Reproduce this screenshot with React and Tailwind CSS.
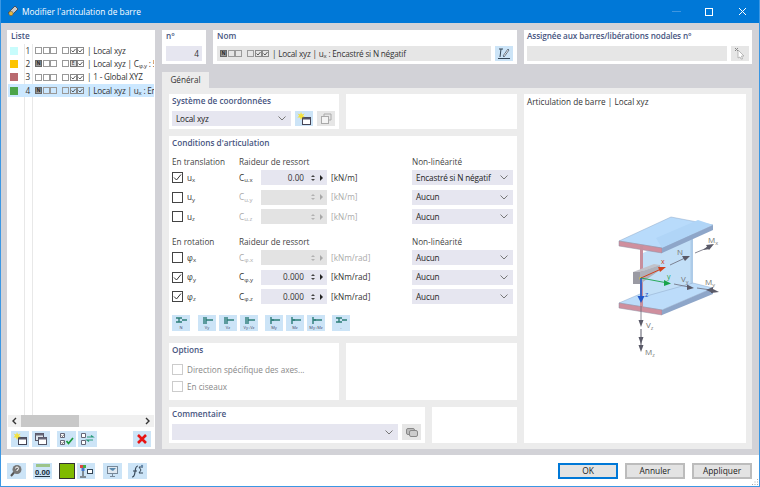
const FONT = "font-['Open_Sans',sans-serif]"

function Mini({ kind }) {
  if (kind === 'n') {
    return <span className="w-[7px] h-[7px] border border-[#666] bg-[#9a9a9a] text-[5px] leading-[5px] text-center font-bold text-[#222]">N</span>
  }
  if (kind === 'c') {
    return (
      <span className="w-[7px] h-[7px] border border-[#888] flex items-center justify-center">
        <svg width="5" height="5" viewBox="0 0 5 5"><path d="M0.5 2.5 L2 4 L4.5 1" fill="none" stroke="#333" strokeWidth="0.8" /></svg>
      </span>
    )
  }
  if (kind === 'e') {
    return <span className="w-[7px] h-[7px] border border-[#777] bg-[#ddd] text-[5px] leading-[5px] text-center text-[#333]">E</span>
  }
  return <span className="w-[7px] h-[7px] border border-[#999]" />
}

function MiniSet({ kinds }) {
  return (
    <span className="inline-flex items-center gap-[5px] shrink-0">
      <span className="flex gap-[0.5px]">{kinds[0].map((k, i) => <Mini key={i} kind={k} />)}</span>
      <span className="flex gap-[0.5px]">{kinds[1].map((k, i) => <Mini key={i} kind={k} />)}</span>
    </span>
  )
}

const LIST = [
  { n: 1, color: 'bg-[#c8fcfc]', kinds: [['o', 'o', 'o'], ['o', 'c', 'c']], text: <>| Local xyz</> },
  { n: 2, color: 'bg-[#fdc400]', kinds: [['n', 'o', 'o'], ['o', 'e', 'c']], text: <>| Local xyz | C<sub className="text-[6px]">φ.y</sub> : 5</> },
  { n: 3, color: 'bg-[#b96a6f]', kinds: [['o', 'o', 'o'], ['o', 'c', 'c']], text: <>| 1 - Global XYZ</> },
  { n: 4, color: 'bg-[#4ca54a]', kinds: [['n', 'o', 'o'], ['o', 'c', 'c']], text: <>| Local xyz | u<sub className="text-[6px]">x</sub> : En</>, active: true },
]

const ROWS_T = [
  { sym: 'u', sub: 'x', c: 'u.x', on: true, val: '0.00', unit: '[kN/m]', nl: 'Encastré si N négatif' },
  { sym: 'u', sub: 'y', c: 'u.y', on: false, val: '', unit: '[kN/m]', nl: 'Aucun' },
  { sym: 'u', sub: 'z', c: 'u.z', on: false, val: '', unit: '[kN/m]', nl: 'Aucun' },
]
const ROWS_R = [
  { sym: 'φ', sub: 'x', c: 'φ.x', on: false, val: '', unit: '[kNm/rad]', nl: 'Aucun' },
  { sym: 'φ', sub: 'y', c: 'φ.y', on: true, val: '0.000', unit: '[kNm/rad]', nl: 'Aucun' },
  { sym: 'φ', sub: 'z', c: 'φ.z', on: true, val: '0.000', unit: '[kNm/rad]', nl: 'Aucun' },
]

function Chevron({ className = '' }) {
  return (
    <svg width="8" height="5" viewBox="0 0 8 5" className={`shrink-0 ${className}`}>
      <path d="M0.5 0.5 L4 4 L7.5 0.5" fill="none" stroke="#777" strokeWidth="1" />
    </svg>
  )
}

function Check({ on, disabled }) {
  return (
    <span className={`w-[11px] h-[11px] border bg-white flex items-center justify-center shrink-0 ${disabled ? 'border-[#ccc]' : 'border-[#444]'}`}>
      {on && (
        <svg width="9" height="9" viewBox="0 0 9 9">
          <path d="M1 4.5 L3.5 7 L8 1.5" fill="none" stroke="#333" strokeWidth="1" />
        </svg>
      )}
    </span>
  )
}

function Select({ label, className = '' }) {
  return (
    <div className={`h-[15px] bg-[#e6e6f0] flex items-center justify-between pl-1 pr-[5px] whitespace-nowrap tracking-[-0.15px] font-medium text-[#222] ${className}`}>
      <span>{label}</span>
      <Chevron />
    </div>
  )
}

function Row({ row }) {
  const off = !row.on
  return (
    <div className="flex items-center h-[15px]">
      <div className="w-[67px] flex items-center shrink-0">
        <Check on={row.on} />
        <span className="ml-[4px] font-medium text-[#333]">
          {row.sym}<sub className="text-[6px]">{row.sub}</sub>
        </span>
      </div>
      <span className={`w-[22px] shrink-0 ${off ? 'text-[#aaa]' : 'text-[#333]'}`}>
        C<sub className="text-[6px]">{row.c}</sub>
      </span>
      <div className={`w-[66px] h-[15px] shrink-0 flex items-center justify-end ${off ? 'bg-[#e3e3e3]' : 'bg-[#e6e6f0]'}`}>
        <span className="font-medium text-[#333]">{row.val}</span>
        <span className={`ml-[7px] flex flex-col items-center gap-[2px] text-[#444] ${off ? 'opacity-30' : ''}`}>
          <span className="w-0 h-0 border-x-[2px] border-x-transparent border-b-[2px] border-b-current" />
          <span className="w-0 h-0 border-x-[2px] border-x-transparent border-t-[2px] border-t-current" />
        </span>
        <span className={`ml-[5px] mr-[4px] w-0 h-0 border-y-[3px] border-y-transparent border-l-[3px] border-l-[#222] ${off ? 'opacity-30' : ''}`} />
      </div>
      <span className={`ml-[4px] w-[81px] shrink-0 ${off ? 'text-[#aaa]' : 'text-[#333] font-medium'}`}>{row.unit}</span>
      <Select label={row.nl} className="w-[101px]" />
    </div>
  )
}

function ColHeads({ first }) {
  return (
    <div className="flex h-[14px] items-center font-medium text-[#444]">
      <span className="w-[67px] shrink-0">{first}</span>
      <span className="w-[173px] shrink-0">Raideur de ressort</span>
      <span>Non-linéarité</span>
    </div>
  )
}

function HingeBtn({ label, kind, className = '' }) {
  return (
    <span className={`w-[18px] h-[16px] bg-[#cce4f7] flex flex-col items-center shrink-0 ${className}`}>
      <svg width="14" height="9" viewBox="0 0 14 9" className="mt-[1px]">
        {kind === 'n' && <path d="M2 2 H8 M2 6 H8 M5 2 V6 M8 4 H13" stroke="#2d7d78" strokeWidth="1.4" fill="none" />}
        {kind === 'v' && <path d="M4 1 V8 M6 1 V8 M6 4 H13" stroke="#2d7d78" strokeWidth="1.4" fill="none" />}
        {kind === 'm' && <path d="M4 1 V8 M4 4 H13 M6 3 V5" stroke="#2d7d78" strokeWidth="1.4" fill="none" />}
      </svg>
      <span className="text-[4px] leading-[5px] text-[#446]">{label}</span>
    </span>
  )
}

function IconBtn({ children, disabled, className = 'w-[18px] h-[16px]' }) {
  return (
    <span className={`flex items-center justify-center shrink-0 ${disabled ? 'bg-[#e6e6e6]' : 'bg-[#cce4f7]'} ${className}`}>
      {children}
    </span>
  )
}

function NewIcon() {
  return (
    <svg width="15" height="14" viewBox="0 0 15 14">
      <rect x="5.5" y="5.5" width="8" height="7" fill="#fff" stroke="#445" />
      <rect x="5.5" y="5.5" width="8" height="2" fill="#556" />
      <path d="M4 0 L5 2.6 L7.6 1.4 L6 3.8 L8 5 L5.4 5.2 L4 8 L3 5.4 L0.4 5.6 L2.2 3.8 L0.6 1.4 L3.2 2.6 Z" fill="#f4e23c" />
    </svg>
  )
}

function CopyIcon() {
  return (
    <svg width="14" height="14" viewBox="0 0 14 14">
      <rect x="1.5" y="1.5" width="8" height="7" fill="#dfe7ee" stroke="#556" />
      <rect x="1.5" y="1.5" width="8" height="2" fill="#667" />
      <rect x="4.5" y="5.5" width="8" height="7" fill="#fff" stroke="#556" />
      <rect x="4.5" y="5.5" width="8" height="2" fill="#667" />
    </svg>
  )
}

function Beam() {
  return (
    <svg width="150" height="160" viewBox="0 0 150 160" className="shrink-0">
      {/* web */}
      <polygon points="63,48 113,24 113,80 63,98" fill="#c2dff7" />
      <rect x="110.5" y="25" width="2.5" height="55" fill="#adcbe8" />
      {/* bottom flange */}
      <polygon points="39,98 60,89 63,92 113,78 133,83 82,105" fill="#bcdcfa" stroke="#8fa9c8" strokeWidth="0.5" />
      <polygon points="39,98 82,105 82,110 39,103" fill="#cf8f9e" stroke="#8f8fa2" strokeWidth="0.5" />
      <polygon points="82,105 133,83 133,89 82,110" fill="#8ea6c9" />
      {/* top flange */}
      <polygon points="39,36 91,12 133,20 82,43" fill="#b8dbfb" stroke="#8fa9c8" strokeWidth="0.5" />
      <polygon points="76,33 118,15 133,20 82,43" fill="#b0d5f7" />
      <polygon points="39,36 82,43 82,48 39,41" fill="#cf8f9e" stroke="#8f8fa2" strokeWidth="0.5" />
      <polygon points="82,43 133,20 133,25 82,48" fill="#8ea6c9" />
      {/* front web */}
      <rect x="60" y="41" width="3" height="61" fill="#c78f9d" />
      {/* hinge block */}
      <polygon points="53,67 74,59 80,60 60,67" fill="#c2c2c9" />
      <rect x="53" y="67" width="7" height="12" fill="#9a9aa3" />
      <polygon points="60,67 80,60 80,65 60,79" fill="#b0b0b9" />
      <rect x="59.5" y="72" width="2.5" height="2.5" fill="#d8c43a" />
      {/* local axes */}
      <path d="M61 73 L80 64.5" stroke="#d2401d" strokeWidth="1" />
      <path d="M86 62 L78 62 L80 67 Z" fill="#d2401d" />
      <path d="M61 73 L85 77.5" stroke="#19a44a" strokeWidth="0.9" />
      <path d="M91 78.5 L84 75 L84 81 Z" fill="#19a44a" />
      <path d="M61 73 L61 93" stroke="#1f55c8" strokeWidth="1.6" />
      <path d="M61 98 L57.5 91 L64.5 91 Z" fill="#1f55c8" />
      {/* force arrows */}
      <path d="M90 60 L105 53" stroke="#6a6a78" strokeWidth="0.8" />
      <path d="M110 51 L102 51 L105 56 Z" fill="#5a5a68" />
      <path d="M115 48 L127 43" stroke="#6a6a78" strokeWidth="0.8" />
      <path d="M134 39 L126 40 L129 45 Z" fill="#5a5a68" />
      <path d="M123 45 L129 40 L130 44 Z" fill="#5a5a68" />
      <path d="M94 79 L109 82" stroke="#6a6a78" strokeWidth="0.8" />
      <path d="M114 83 L107 79.5 L107 85 Z" fill="#5a5a68" />
      <path d="M117 83 L131 85" stroke="#6a6a78" strokeWidth="0.8" />
      <path d="M139 87 L131 83 L131 88 Z" fill="#5a5a68" />
      <path d="M126 85 L133 82 L133 88 Z" fill="#5a5a68" />
      <path d="M61 101 L61 116" stroke="#6a6a78" strokeWidth="0.8" />
      <path d="M61 122 L58.5 115 L63.5 115 Z" fill="#5a5a68" />
      <path d="M61 124 L61 140" stroke="#5a5a68" strokeWidth="1" />
      <path d="M61 139 L58.5 132 L63.5 132 Z" fill="#5a5a68" />
      <path d="M61 147 L58.5 140 L63.5 140 Z" fill="#5a5a68" />
      <g fontFamily="'Open Sans', sans-serif" fontSize="8" fill="#777">
        <text x="97" y="50">N</text>
        <text x="128" y="38">M<tspan fontSize="5.5" dy="2">x</tspan></text>
        <text x="101" y="77">V<tspan fontSize="5.5" dy="2">y</tspan></text>
        <text x="125" y="80">M<tspan fontSize="5.5" dy="2">y</tspan></text>
        <text x="66" y="123">V<tspan fontSize="5.5" dy="2">z</tspan></text>
        <text x="65" y="150">M<tspan fontSize="5.5" dy="2">z</tspan></text>
      </g>
      <g fontFamily="'Open Sans', sans-serif" fontSize="7">
        <text x="81" y="59" fill="#d2401d">x</text>
        <text x="87" y="74" fill="#19a44a">y</text>
        <text x="65" y="92" fill="#1f55c8">z</text>
      </g>
    </svg>
  )
}

export default function App() {
  return (
    <div className={`w-[760px] h-[487px] overflow-hidden flex flex-col border border-[#3c97e3] border-t-0 text-[8.2px] leading-[12px] bg-[#d2d2d7] ${FONT}`}>
      {/* title bar */}
      <div className="h-[23px] bg-[#0078d7] flex items-center text-white shrink-0 -mx-px">
        <svg width="12" height="13" viewBox="0 0 12 13" className="ml-[7px]">
          <path d="M1 8 L8 1 L11 4 L4 11 Z" fill="#c9c9c9" stroke="#44505e" />
          <circle cx="4" cy="8.5" r="2.2" fill="#e8b93c" stroke="#44505e" strokeWidth="0.5" />
        </svg>
        <span className="ml-[3px] text-[8.4px]">Modifier l'articulation de barre</span>
        <svg width="120" height="23" viewBox="0 0 120 23" className="ml-auto">
          <path d="M32 11.5 H41" stroke="#3f96e0" />
          <rect x="65.5" y="8.5" width="7" height="7" fill="none" stroke="#fff" strokeWidth="1" />
          <path d="M99 8 L106 15 M106 8 L99 15" stroke="#fff" />
        </svg>
      </div>

      {/* body */}
      <div className="flex-1 flex gap-[7px] pl-[6px] pr-[7px] pt-[7px] pb-[6px] min-h-0">
        {/* list */}
        <div className="w-[148px] bg-white flex flex-col shrink-0">
          <div className="h-[12px] pl-1 font-semibold text-[#47557f] flex items-center">Liste</div>
          <div className="flex-1 relative min-h-0 pt-[2px] px-[1px] overflow-hidden">
            <div className="absolute left-[17px] top-[2px] bottom-0 w-[1px] bg-[#e8e8e8]" />
            <div className="absolute left-[25px] top-[2px] bottom-0 w-[1px] bg-[#e8e8e8]" />
            <div className="flex flex-col relative">
              {LIST.map(r => (
                <div key={r.n} className={`h-[13.3px] flex items-center overflow-hidden whitespace-nowrap tracking-[-0.2px] ${r.active ? 'bg-[#cce8ff]' : ''}`}>
                  <span className={`w-2 h-2 ml-[2px] ${r.color} shrink-0`} />
                  <span className="w-[12px] text-right shrink-0 font-medium text-[#333]">{r.n}</span>
                  <span className="ml-[5px] flex"><MiniSet kinds={r.kinds} /></span>
                  <span className="ml-[3px] font-medium text-[#333]">{r.text}</span>
                </div>
              ))}
            </div>
          </div>
          <div className="h-[12px] mx-[1px] bg-[#f0f0f0] flex items-center shrink-0">
            <svg width="13" height="12" viewBox="0 0 13 12" className="shrink-0"><path d="M8 3 L5 6 L8 9" fill="none" stroke="#333" strokeWidth="1.4" /></svg>
            <span className="w-[58px] h-[12px] bg-[#c8c8c8]" />
            <svg width="13" height="12" viewBox="0 0 13 12" className="ml-auto shrink-0"><path d="M5 3 L8 6 L5 9" fill="none" stroke="#333" strokeWidth="1.4" /></svg>
          </div>
          <div className="h-[22px] flex items-start pt-[4px] pl-[4px] gap-[3px] shrink-0">
            <IconBtn><NewIcon /></IconBtn>
            <IconBtn><CopyIcon /></IconBtn>
            <IconBtn className="w-[19px] h-[16px] ml-[4px]">
              <svg width="15" height="14" viewBox="0 0 15 14"><path d="M1.5 1.5 H5.5 V5.5 H1.5 Z M1.5 8.5 H5.5 V12.5 H1.5 Z" fill="#fff" stroke="#667" /><path d="M2.5 3.5 L3.5 4.5 L5 2.5 M2.5 10.5 L3.5 11.5 L5 9.5" fill="none" stroke="#333" strokeWidth="0.7" /><path d="M7.5 9 L9.5 11.5 L14 6" fill="none" stroke="#1a9a3a" strokeWidth="1.7" /></svg>
            </IconBtn>
            <IconBtn className="w-[19px] h-[16px] -ml-[1px]">
              <svg width="15" height="14" viewBox="0 0 15 14"><path d="M1.5 1.5 H5.5 V5.5 H1.5 Z M1.5 8.5 H5.5 V12.5 H1.5 Z" fill="#fff" stroke="#667" /><path d="M7 5 H13 L11 3.5 M13 8 H7 L9 9.5" fill="none" stroke="#2a9a7a" strokeWidth="1.2" /></svg>
            </IconBtn>
            <IconBtn className="w-[18px] h-[16px] ml-auto mr-[4px]">
              <svg width="12" height="12" viewBox="0 0 12 12"><path d="M2 2 L10 10 M10 2 L2 10" stroke="#e81414" strokeWidth="2.6" /></svg>
            </IconBtn>
          </div>
        </div>

        {/* right side */}
        <div className="flex-1 flex flex-col min-w-0">
          {/* header row */}
          <div className="flex gap-[7px] h-[34px] shrink-0">
            <div className="w-[44px] bg-white px-[4px]">
              <div className="h-[12px] mb-[4px] font-semibold text-[#47557f] flex items-center">n°</div>
              <div className="h-[15px] bg-[#e6e6f0] flex items-center justify-end pr-[3px] font-medium text-[#333]">4</div>
            </div>
            <div className="w-[304px] bg-white px-[4px]">
              <div className="h-[12px] mb-[4px] font-semibold text-[#47557f] flex items-center">Nom</div>
              <div className="flex gap-[4px]">
                <div className="flex-1 h-[15px] bg-[#e6e6e6] flex items-center pl-[3px] whitespace-nowrap tracking-[-0.2px] font-medium text-[#333]">
                  <MiniSet kinds={[['n', 'o', 'o'], ['o', 'c', 'c']]} />
                  <span className="ml-[3px]">| Local xyz | u<sub className="text-[6px]">x</sub> : Encastré si N négatif</span>
                </div>
                <IconBtn className="w-[18px] h-[15px]">
                  <svg width="14" height="13" viewBox="0 0 14 13"><path d="M2 2 H6 M4 2 L3 10 M1 11.5 H13" fill="none" stroke="#345" /><path d="M6 9 L11 2 L12 3 L7 10 Z" fill="#fff" stroke="#345" strokeWidth="0.7" /></svg>
                </IconBtn>
              </div>
            </div>
            <div className="flex-1 bg-white pl-[3px] pr-[3px]">
              <div className="h-[12px] mb-[4px] font-semibold text-[#47557f] flex items-center whitespace-nowrap tracking-[-0.1px]">Assignée aux barres/libérations nodales n°</div>
              <div className="flex gap-[4px]">
                <div className="flex-1 h-[15px] bg-[#e6e6e6]" />
                <IconBtn disabled className="w-[18px] h-[15px]">
                  <svg width="12" height="13" viewBox="0 0 12 13"><path d="M4 3 L10 9 L7.5 9 L8.5 12 L7 12 L6 10 L4 11 Z" fill="#fff" stroke="#aaa" strokeWidth="0.8" /><path d="M1 1 L4 4 M4 1 L1 4" stroke="#888" /></svg>
                </IconBtn>
              </div>
            </div>
          </div>

          {/* tab */}
          <div className="flex mt-[8px] shrink-0">
            <div className="w-[47px] h-[16px] bg-[#ececec] flex items-center justify-center font-medium text-[#333]">Général</div>
          </div>

          {/* tab pane */}
          <div className="flex-1 bg-[#ececec] flex gap-[7px] pl-[7px] pr-[6px] pt-[6px] pb-[6px] min-h-0">
            <div className="w-[348px] flex flex-col gap-[7px] shrink-0">
              <div className="flex gap-[7px] h-[35px] shrink-0">
                <div className="w-[170px] bg-white px-[3px] pt-[1px]">
                  <div className="h-[12px] mb-[4px] font-semibold text-[#47557f] flex items-center">Système de coordonnées</div>
                  <div className="flex gap-[4px]">
                    <Select label="Local xyz" className="w-[119px]" />
                    <IconBtn className="w-[18px] h-[15px]"><NewIcon /></IconBtn>
                    <IconBtn disabled className="w-[18px] h-[15px]">
                      <svg width="14" height="13" viewBox="0 0 14 13"><rect x="2.5" y="4.5" width="7" height="7" fill="#f4f4f4" stroke="#aaa" /><path d="M5 4 V2 H12 V8 H10" fill="none" stroke="#aaa" /></svg>
                    </IconBtn>
                  </div>
                </div>
                <div className="flex-1 bg-white" />
              </div>

              <div className="h-[200px] bg-white px-[3px] pt-[1px] shrink-0">
                <div className="h-[12px] font-semibold text-[#47557f] flex items-center">Conditions d'articulation</div>
                <div className="mt-[6px]"><ColHeads first="En translation" /></div>
                <div className="mt-[1px] flex flex-col gap-[4.5px]">
                  {ROWS_T.map(r => <Row key={r.sub} row={r} />)}
                </div>
                <div className="mt-[11px]"><ColHeads first="En rotation" /></div>
                <div className="mt-[1px] flex flex-col gap-[4.5px]">
                  {ROWS_R.map(r => <Row key={r.sub} row={r} />)}
                </div>
                <div className="mt-[11px] flex">
                  <HingeBtn kind="n" label="N" />
                  <HingeBtn kind="v" label="Vy" className="ml-[8px]" />
                  <HingeBtn kind="v" label="Vz" className="ml-[3px]" />
                  <HingeBtn kind="v" label="Vy+Vz" className="ml-[3px]" />
                  <HingeBtn kind="m" label="My" className="ml-[7px]" />
                  <HingeBtn kind="m" label="Mz" className="ml-[3px]" />
                  <HingeBtn kind="m" label="My+Mz" className="ml-[3px]" />
                  <HingeBtn kind="n" label="-" className="ml-[7px]" />
                </div>
              </div>

              <div className="flex gap-[7px] h-[57px] shrink-0">
                <div className="w-[170px] bg-white px-[3px] pt-[1px]">
                  <div className="h-[12px] font-semibold text-[#47557f] flex items-center">Options</div>
                  <div className="mt-[7px] flex items-center gap-[4px] h-[13px] text-[#888]"><Check disabled />Direction spécifique des axes...</div>
                  <div className="mt-[4px] flex items-center gap-[4px] h-[13px] text-[#888]"><Check disabled />En ciseaux</div>
                </div>
                <div className="flex-1 bg-white" />
              </div>

              <div className="flex gap-[7px] flex-1 min-h-0">
                <div className="w-[256px] bg-white px-[3px] pt-[1px]">
                  <div className="h-[12px] mb-[4px] font-semibold text-[#47557f] flex items-center">Commentaire</div>
                  <div className="flex gap-[4px]">
                    <div className="w-[226px] h-[16px] bg-[#e6e6f0] flex items-center justify-end pr-[5px]"><Chevron /></div>
                    <IconBtn disabled className="w-[19px] h-[16px]">
                      <svg width="14" height="12" viewBox="0 0 14 12"><rect x="1.5" y="2.5" width="8" height="6" rx="1.5" fill="#bbb" stroke="#888" /><rect x="4.5" y="4.5" width="8" height="6" rx="1.5" fill="#ccc" stroke="#888" /></svg>
                    </IconBtn>
                  </div>
                </div>
                <div className="flex-1 bg-white" />
              </div>
            </div>

            {/* preview */}
            <div className="flex-1 bg-white flex flex-col px-[3px] pt-[1px] min-w-0">
              <div className="h-[13px] flex items-center font-medium text-[#333]">Articulation de barre | Local xyz</div>
              <div className="ml-[53px] mt-[97px]"><Beam /></div>
            </div>
          </div>
        </div>
      </div>

      {/* footer */}
      <div className="h-[31px] bg-white flex items-center shrink-0 pl-[6px] pr-[7px] relative">
        <IconBtn className="w-[19px] h-[16px]"><svg width="13" height="13" viewBox="0 0 13 13"><circle cx="7" cy="5.5" r="4.5" fill="#777" /><path d="M4 8.5 L1 12" stroke="#555" strokeWidth="2" /><path d="M5.5 4.5 A1.5 1.5 0 1 1 7 6 V7" fill="none" stroke="#fff" /></svg></IconBtn>
        <span className="ml-[7px] w-[19px] h-[16px] bg-[#cce4f7] flex flex-col items-center shrink-0">
          <span className="mt-[1px] w-[14px] h-[3px] bg-[#9cc48a]" />
          <span className="text-[7.5px] font-bold leading-[10px] text-[#234] underline">0.00</span>
        </span>
        <span className="ml-[7px] w-[16px] h-[16px] bg-[#7fba00] border border-[#333] shrink-0" />
        <IconBtn className="w-[18px] h-[16px] ml-[2px]"><svg width="15" height="14" viewBox="0 0 15 14"><path d="M4 6 V12 M1 13 H7" stroke="#333" /><rect x="1" y="1" width="3" height="3" fill="#d44" /><rect x="4" y="1" width="3" height="3" fill="#4a4" /><rect x="2.5" y="4" width="3" height="3" fill="#47c" /><rect x="8.5" y="5.5" width="5" height="4" fill="#fff" stroke="#345" /></svg></IconBtn>
        <IconBtn className="w-[19px] h-[16px] ml-[8px]"><svg width="15" height="14" viewBox="0 0 15 14"><rect x="2.5" y="2.5" width="10" height="7" fill="#dfe8f0" stroke="#789" /><path d="M4 4 H11 L8 7 L6 6 Z" fill="#5a8ab0" /><path d="M7.5 10 V12 M5 12.5 H10" stroke="#789" /></svg></IconBtn>
        <IconBtn className="w-[19px] h-[16px] ml-[6px]"><svg width="15" height="14" viewBox="0 0 15 14"><path d="M2 13 Q4.5 13 5 8 Q5.5 2 8 2 M3 7 H7" fill="none" stroke="#345" strokeWidth="1.2" /><path d="M13 3 H9 L11 6 L9 9 H13" fill="none" stroke="#345" /><circle cx="12" cy="2" r="1.2" fill="#68a" /></svg></IconBtn>
        <div className="ml-auto flex gap-[7px]">
          <button className="w-[60px] h-[16px] bg-[#e3e3e3] border-2 border-[#0078d7] text-[8.4px] leading-[12px] text-[#222] flex items-center justify-center">OK</button>
          <button className="w-[60px] h-[16px] bg-[#e3e3e3] border-2 border-[#bcbcbc] text-[8.4px] leading-[12px] text-[#222] flex items-center justify-center">Annuler</button>
          <button className="w-[60px] h-[16px] bg-[#e3e3e3] border-2 border-[#bcbcbc] text-[8.4px] leading-[12px] text-[#222] flex items-center justify-center">Appliquer</button>
        </div>
        <svg width="8" height="8" viewBox="0 0 8 8" className="absolute right-0 bottom-0">
          <path d="M6 1 H7 V2 H6 Z M3.5 3.5 H4.5 V4.5 H3.5 Z M6 3.5 H7 V4.5 H6 Z M1 6 H2 V7 H1 Z M3.5 6 H4.5 V7 H3.5 Z M6 6 H7 V7 H6 Z" fill="#aaa" />
        </svg>
      </div>
    </div>
  )
}
